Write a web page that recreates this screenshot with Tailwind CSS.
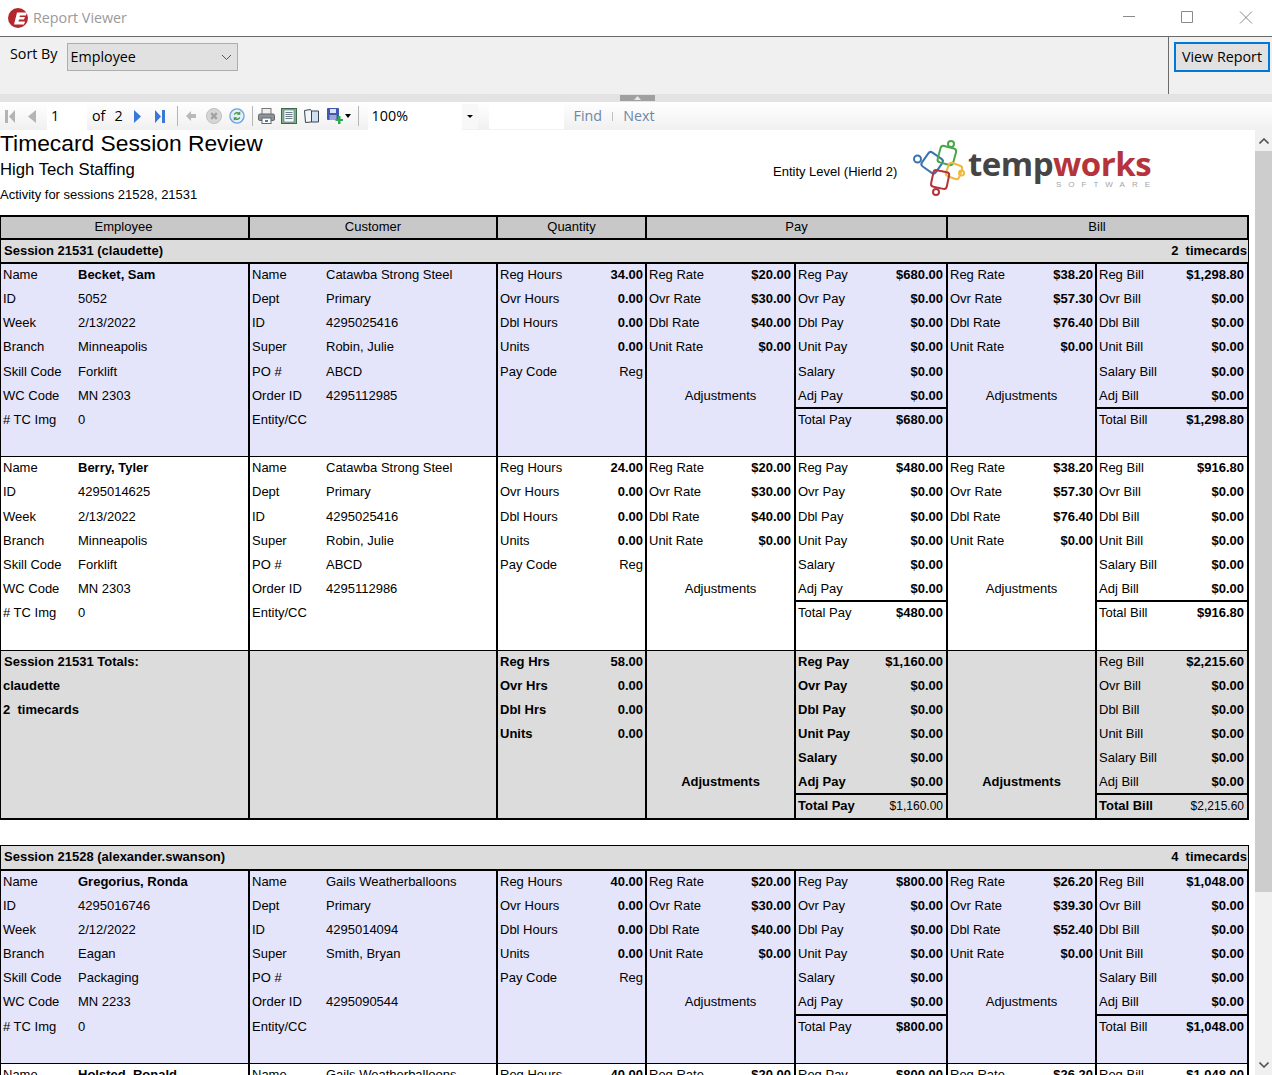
<!doctype html>
<html><head><meta charset="utf-8"><script src="https://cdn.jsdelivr.net/npm/@tailwindcss/browser@4"></script></head>
<body class="m-0 bg-white">
<div class="w-[1272px] h-[1075px] overflow-hidden flex flex-col relative font-['Open_Sans',sans-serif]">
  <!-- title bar -->
  <div class="h-[37px] shrink-0 flex items-center border-b border-[#6b6b6b] bg-white">
    <svg class="ml-[8px] w-[20px] h-[20px]" viewBox="0 0 20 20"><circle cx="10" cy="10" r="10" fill="#b3272d"/><path d="M9 4.500h10l-1 3h-6l-.5 1.500h5.500l-1 2.500h-5l-.5 2h6.500l-1 3h-10z" fill="#fff"/></svg>
    <span class="ml-[5px] text-[14.300px] text-[#9a9a9a]">Report Viewer</span>
    <svg class="ml-auto mr-[19px] w-[130px] h-[16px]" viewBox="0 0 130 16" fill="none" stroke="#8a8a8a" stroke-width="1"><path d="M0 6.500h12M58.500 1.500h11v11h-11zM117 1.500l12 12M129 1.500l-12 12" /></svg>
  </div>
  <!-- sort panel -->
  <div class="h-[57px] shrink-0 bg-[#f0f0f0] flex">
    <span class="ml-[10px] mt-[6px] text-[14.300px] leading-[22px] text-black">Sort By</span>
    <div class="ml-[9px] mt-[6px] w-[171px] h-[28px] bg-[#e1e1e1] border border-[#adadad] flex items-center justify-between pl-[3px] pr-[5px] text-[14.300px] text-black"><span>Employee</span><svg class="w-[11px] h-[7px]" viewBox="0 0 11 7" fill="none" stroke="#555" stroke-width="1"><path d="M1 1l4.500 4.500L10 1"/></svg></div>
    <div class="ml-auto w-[104px] border-l border-[#6b6b6b] pl-[5px] pt-[5px]">
      <div class="w-[96px] h-[30px] bg-[#e1e1e1] border-2 border-[#0078d7] flex items-center justify-center text-[14.300px] text-black">View Report</div>
    </div>
  </div>
  <!-- splitter -->
  <div class="h-[8px] shrink-0 bg-[#e3e3e3] flex justify-start">
    <div class="ml-[620px] mt-[1px] w-[35px] h-[6px] bg-[#a0a0a0] flex justify-center items-start"><svg class="w-[7px] h-[4px] mt-[1px]" viewBox="0 0 7 4"><path d="M0 4l3.500-4L7 4z" fill="#e8e8e8"/></svg></div>
  </div>
  <!-- toolbar -->
  <div class="h-[28px] shrink-0 bg-gradient-to-b from-white to-[#f0f0f0] flex items-center relative text-[14.300px] text-black">
    <svg class="ml-[5px] w-[10px] h-[13px]" viewBox="0 0 10 13"><rect x="0" y="0" width="3" height="13" fill="#b4b4b4"/><path d="M10 0v13L4 6.500z" fill="#b4b4b4"/></svg>
    <svg class="ml-[13px] w-[8px] h-[13px]" viewBox="0 0 8 13"><path d="M8 0v13L0 6.500z" fill="#b4b4b4"/></svg>
    <div class="ml-[11px] w-[40px] h-[27px] bg-white pl-[4px] leading-[26px]">1</div>
    <span class="ml-[5px]">of</span><span class="ml-[9px]">2</span>
    <svg class="ml-[11px] w-[7px] h-[13px]" viewBox="0 0 7 13"><path d="M0 0v13L7 6.500z" fill="#3a78d8"/></svg>
    <svg class="ml-[14px] w-[10px] h-[13px]" viewBox="0 0 10 13"><path d="M0 0v13L6 6.500z" fill="#3a78d8"/><rect x="7" y="0" width="3" height="13" fill="#3a78d8"/></svg>
    <div class="ml-[12px] w-px h-[20px] bg-[#b5b5b5]"></div>
    <svg class="ml-[8px] w-[10px] h-[10px]" viewBox="0 0 10 10"><path d="M0 5l5-5v3h5v4H5v3z" fill="#b9b9b9"/></svg>
    <svg class="ml-[10px] w-[16px] h-[16px]" viewBox="0 0 17 17"><circle cx="8.500" cy="8.500" r="8" fill="#d6d6d6" stroke="#bdbdbd"/><path d="M5.500 5.500l6 6M11.500 5.500l-6 6" stroke="#a3a3a3" stroke-width="2.500"/></svg>
    <svg class="ml-[7px] w-[16px] h-[16px]" viewBox="0 0 17 17"><circle cx="8.500" cy="8.500" r="7.500" fill="#e4eefb" stroke="#6f9fe0" stroke-width="1.400"/><path d="M5 7a3.700 3.700 0 0 1 5.500-2.300L12 3.500v3.800H8.300l1.200-1.200A2.400 2.400 0 0 0 6.300 7.200z" fill="#3f9a3f"/><path d="M12 10a3.700 3.700 0 0 1-5.500 2.300L5 13.500V9.700h3.700l-1.200 1.200A2.400 2.400 0 0 0 10.700 9.800z" fill="#3f9a3f"/></svg>
    <div class="ml-[7px] w-px h-[20px] bg-[#b5b5b5]"></div>
    <svg class="ml-[5px] w-[17px] h-[16px]" viewBox="0 0 17 16"><rect x="4" y="0.500" width="9" height="6" fill="#eee" stroke="#777"/><rect x="0.500" y="6" width="16" height="6.500" rx="1.500" fill="#8d939c" stroke="#666"/><rect x="4" y="10" width="9" height="5.500" fill="#fff" stroke="#666"/><rect x="7" y="12" width="3" height="2" fill="#3b82c4"/></svg>
    <svg class="ml-[6px] w-[16px] h-[16px]" viewBox="0 0 16 16"><rect x="0.500" y="0.500" width="15" height="15" fill="#7fae88" stroke="#3e6b47"/><rect x="3" y="2" width="10" height="12" fill="#f4f7fb" stroke="#6c7a8a" stroke-width=".6"/><path d="M4.500 4.500h7M4.500 6.500h7M4.500 8.500h7M4.500 10.500h7" stroke="#6c7a8a"/></svg>
    <svg class="ml-[7px] w-[15px] h-[14px]" viewBox="0 0 15 14"><path d="M.5 1.500L6.500.5 7.500 2V13l-6 .500z" fill="#f4f6fa" stroke="#3a4450"/><path d="M7.500 2h7v11h-7z" fill="#cfe0f3" stroke="#3a4450"/></svg>
    <svg class="ml-[8px] w-[16px] h-[17px]" viewBox="0 0 16 17"><rect x="0" y="0" width="12" height="12" rx="1" fill="#4258b0"/><rect x="3" y="1" width="6" height="4" fill="#dfe5ef"/><rect x="2.500" y="7" width="7" height="5" fill="#9aa7d8"/><path d="M11 8h2.500v3H16v2h-2.500v3H11v-3H8.500v-2H11z" fill="#2fa84f"/></svg>
    <svg class="ml-[2px] w-[6px] h-[4px]" viewBox="0 0 6 4"><path d="M0 0h6L3 4z" fill="#000"/></svg>
    <div class="ml-[7px] w-px h-[20px] bg-[#b5b5b5]"></div>
    <div class="ml-[9px] w-[94px] h-[27px] bg-white pl-[4px] leading-[26px]">100%</div>
    <div class="w-[16px] h-[25px] bg-[#f8f8f8] flex items-center justify-center"><svg class="w-[6px] h-[3px]" viewBox="0 0 6 3"><path d="M0 0h6L3 3z" fill="#000"/></svg></div>
    <div class="ml-[11px] w-[75px] h-[26px] bg-white"></div>
    <span class="ml-[10px] text-[#6d87a8]">Find</span>
    <span class="ml-[10px] w-px h-[9px] bg-[#c0c0c0]"></span>
    <span class="ml-[10px] text-[#6d87a8]">Next</span>
  </div>
  <!-- content -->
  <div class="flex flex-1 min-h-0">
    <div id="report" class="w-[1255px] overflow-hidden bg-white font-['Liberation_Sans',Arial,sans-serif] text-[13px] text-black">
      <div class="h-[85px] flex">
        <div class="w-[773px]">
          <div class="text-[22.800px] leading-[26px]">Timecard Session Review</div>
          <div class="text-[16.700px] leading-[20px] mt-[4px]">High Tech Staffing</div>
          <div class="text-[13px] leading-[16px] mt-[7px]">Activity for sessions 21528, 21531</div>
        </div>
        <div class="w-[139px] pt-[34px] text-[13px] leading-[16px]">Entity Level (Hierld 2)</div>
        <div class="flex">
          <svg class="w-[57px] h-[62px] mt-[8px]" viewBox="912 138 57 62" fill="none" stroke-width="2">
            <g stroke="#3a74b0"><rect x="924" y="154" width="17" height="17" rx="3" transform="rotate(35 932 162)"/><circle cx="917.500" cy="159" r="3.500"/></g>
            <g stroke="#4aa64a"><rect x="939" y="147" width="16" height="17" rx="3" transform="rotate(15 947 155)"/><circle cx="951" cy="144" r="3"/></g>
            <g stroke="#eeb93e"><rect x="947" y="164" width="14" height="14" rx="3" transform="rotate(20 954 171)"/><circle cx="961.500" cy="173" r="2.500"/></g>
            <g stroke="#b5343c"><rect x="932" y="171" width="16" height="17" rx="3" transform="rotate(12 940 180)"/><circle cx="936" cy="192" r="3"/></g>
          </svg>
          <div class="w-[186px] relative">
            <div class="font-['Open_Sans',sans-serif] font-bold text-[33px] leading-[30px] tracking-[-0.5px] whitespace-nowrap mt-[19px] -ml-px"><span class="text-[#454545]">temp</span><span class="text-[#b5343c]">works</span></div>
            <div class="absolute top-[50px] left-[87px] text-[8px] leading-[10px] tracking-[7px] text-[#a5a5a5] whitespace-nowrap">SOFTWARE</div>
          </div>
        </div>
      </div>
      <div id="table"></div>
    </div>
    <!-- scrollbar -->
    <div class="w-[17px] bg-[#f0f0f0] flex flex-col">
      <div class="h-[21px] flex items-center justify-center"><svg class="w-[10px] h-[6px]" viewBox="0 0 10 6" fill="none" stroke="#555" stroke-width="1.600"><path d="M.5 5.500L5 1l4.500 4.500"/></svg></div>
      <div class="h-[741px] bg-[#cdcdcd]"></div>
      <div class="mt-auto h-[21px] flex items-center justify-center"><svg class="w-[10px] h-[6px]" viewBox="0 0 10 6" fill="none" stroke="#555" stroke-width="1.600"><path d="M.5.500L5 5l4.500-4.500"/></svg></div>
    </div>
  </div>
</div>
<script>
const R='flex h-[24.17px] leading-[22px] whitespace-nowrap';
const colCls=['w-[250px] border-l border-r-2 border-black','w-[248px] border-r-2 border-black','w-[149px] border-r-2 border-black','w-[149px] border-r-2 border-black','w-[152px] border-r-2 border-black','w-[149px] border-r-2 border-black','w-[152px] border-r-2 border-black'];
function kv(rows,lw,pl){return rows.map(([a,b,bold])=>`<div class="${R}"><span class="${lw} ${pl}">${a}</span><span class="${bold?'font-bold':''}">${b||''}</span></div>`).join('')}
function lr(a,b,pad,o={}){return `<div class="${R} ${o.line?'border-t-2 border-black -mt-[2px] h-[26px]':''} justify-between ${pad}"><span class="${o.bl?'font-bold':''}">${a}</span><span class="${o.thin?'text-[12px]':'font-bold'}">${b}</span></div>`}
function block(d,bg,bb,nudge=''){
 const rate=(p,labels,vals)=>{let s='';labels.forEach((l,i)=>s+=lr(l,vals[i],p));return s};
 const RL=['Reg Rate','Ovr Rate','Dbl Rate','Unit Rate'];
 const col=(i,h)=>`<div class="${colCls[i]} ${bg} shrink-0"><div class="${nudge}">${h}</div></div>`;
 const pay=(n,v,p)=>['Reg','Ovr','Dbl','Unit'].map((x,i)=>lr(x+' '+n,i==0?v:'$0.00',p)).join('')+lr(n=='Pay'?'Salary':'Salary Bill','$0.00',p)+lr('Adj '+n,'$0.00',p)+lr('Total '+n,v,p,{line:1});
 const A=`<div class="h-[24.170px]"></div><div class="${R} justify-center">Adjustments</div>`;
 const Q='pl-[2px] pr-[2px]';
 return `<div class="flex ${bb} w-[1249px] h-[193px] overflow-hidden">`+
 col(0,kv([['Name',d.n,1],['ID',d.id],['Week',d.w],['Branch',d.b],['Skill Code',d.s],['WC Code',d.wc],['# TC Img','0']],'w-[77px]','pl-[2px]'))+
 col(1,kv([['Name',d.c],['Dept','Primary'],['ID',d.cid],['Super',d.sup],['PO #',d.po],['Order ID',d.o],['Entity/CC','']],'w-[76px]','pl-[2px]'))+
 col(2,lr('Reg Hours',d.h,Q)+lr('Ovr Hours','0.00',Q)+lr('Dbl Hours','0.00',Q)+lr('Units','0.00',Q)+lr('Pay Code','<span class="font-normal">Reg</span>',Q))+
 col(3,rate('pl-[2px] pr-[3px]',RL,[d.pr,d.po2,d.pd,'$0.00'])+A)+
 col(4,pay('Pay',d.pay,'pl-[2px] pr-[3px]'))+
 col(5,rate('pl-[2px] pr-[2px]',RL,[d.br,d.bo,d.bd,'$0.00'])+A)+
 col(6,pay('Bill',d.bill,'pl-[2px] pr-[3px]'))+
 `</div>`;
}
function session(l,r,top){return `<div class="flex justify-between items-center ${top} border-b-2 border-black bg-[#dcdcdc] w-[1249px] font-bold pl-[3px] pr-[1px] border-l border-r"><span>${l}</span><span>${r}</span></div>`}
const a={n:'Becket, Sam',id:'5052',w:'2/13/2022',b:'Minneapolis',s:'Forklift',wc:'MN 2303',c:'Catawba Strong Steel',cid:'4295025416',sup:'Robin, Julie',po:'ABCD',o:'4295112985',h:'34.00',pr:'$20.00',po2:'$30.00',pd:'$40.00',pay:'$680.00',br:'$38.20',bo:'$57.30',bd:'$76.40',bill:'$1,298.80'};
const b={...a,n:'Berry, Tyler',id:'4295014625',o:'4295112986',h:'24.00',pay:'$480.00',bill:'$916.80'};
const c={n:'Gregorius, Ronda',id:'4295016746',w:'2/12/2022',b:'Eagan',s:'Packaging',wc:'MN 2233',c:'Gails Weatherballoons',cid:'4295014094',sup:'Smith, Bryan',po:'',o:'4295090544',h:'40.00',pr:'$20.00',po2:'$30.00',pd:'$40.00',pay:'$800.00',br:'$26.20',bo:'$39.30',bd:'$52.40',bill:'$1,048.00'};
const e={...c,n:'Holsted, Ronald'};
const hdr=`<div class="flex h-[25px] bg-[#c8c8c8] border-t-2 border-b-2 border-black w-[1249px] text-center leading-[20px]">
<div class="w-[250px] border-l border-r-2 border-black pr-[2px]">Employee</div><div class="w-[248px] border-r-2 border-black">Customer</div><div class="w-[149px] border-r-2 border-black">Quantity</div><div class="w-[301px] border-r-2 border-black">Pay</div><div class="w-[301px] border-r-2 border-black pr-[1px]">Bill</div></div>`;
const tg='bg-[#dcdcdc]';
const t=lr;
const boldLab={bl:1};
const Q='pl-[2px] pr-[2px]';
const fx='[&>div]:h-[24px]';
const totals=`<div class="flex w-[1249px] h-[171px] border-t-2 border-b-2 border-black -mt-px overflow-hidden">
<div class="${colCls[0]} ${tg} ${fx} shrink-0 font-bold"><div class="${R} pl-[3px]">Session 21531 Totals:</div><div class="${R} pl-[2px]">claudette</div><div class="${R} pl-[2px]">2&nbsp;&nbsp;timecards</div></div>
<div class="${colCls[1]} ${tg} shrink-0"></div>
<div class="${colCls[2]} ${tg} ${fx} shrink-0">${t('Reg Hrs','58.00',Q,boldLab)+t('Ovr Hrs','0.00',Q,boldLab)+t('Dbl Hrs','0.00',Q,boldLab)+t('Units','0.00',Q,boldLab)}</div>
<div class="${colCls[3]} ${tg} shrink-0"><div class="h-[120px]"></div><div class="${R} justify-center font-bold">Adjustments</div></div>
<div class="${colCls[4]} ${tg} ${fx} shrink-0">${['Reg Pay|$1,160.00','Ovr Pay|$0.00','Dbl Pay|$0.00','Unit Pay|$0.00','Salary|$0.00','Adj Pay|$0.00'].map(x=>t(...x.split('|'),'pl-[2px] pr-[3px]',boldLab)).join('')+t('Total Pay','$1,160.00','pl-[2px] pr-[3px]',{line:1,bl:1,thin:1})}</div>
<div class="${colCls[5]} ${tg} shrink-0"><div class="h-[120px]"></div><div class="${R} justify-center font-bold">Adjustments</div></div>
<div class="${colCls[6]} ${tg} ${fx} shrink-0">${['Reg Bill|$2,215.60','Ovr Bill|$0.00','Dbl Bill|$0.00','Unit Bill|$0.00','Salary Bill|$0.00','Adj Bill|$0.00'].map(x=>t(...x.split('|'),'pl-[2px] pr-[3px]')).join('')+t('Total Bill','$2,215.60','pl-[2px] pr-[3px]',{line:1,bl:1,thin:1})}</div>
</div>`;
document.getElementById('table').innerHTML=hdr+session('Session 21531 (claudette)','2&nbsp;&nbsp;timecards','h-[24px]')
 +block(a,'bg-[#e4e4fb]','border-b border-black')+block(b,'bg-white','','mt-[0.3px]')
 +totals
 +`<div class="h-[25px]"></div>`
 +session('Session 21528 (alexander.swanson)','4&nbsp;&nbsp;timecards','h-[26px] pb-[2px] border-t border-black')
 +block(c,'bg-[#e4e4fb]','border-b border-black','-mt-[0.4px]')+block(e,'bg-white','');
</script>
</body></html>
